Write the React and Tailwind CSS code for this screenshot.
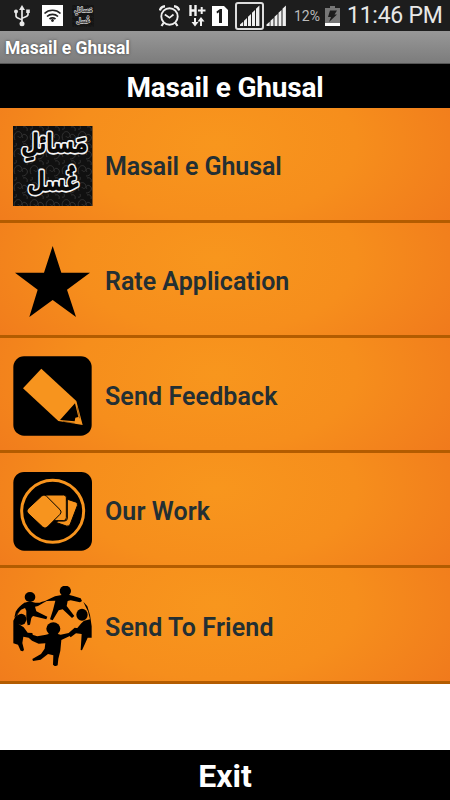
function UsbIcon() {
  return (
    <svg className="h-[22px] w-[18px]" viewBox="0 0 18 22" fill="none" stroke="#e8e8e8" strokeWidth="1.7">
      <path d="M9 19V3M9 15.500C9 13.500 3 14 3 11V7M9 14c0-2 6-1.500 6-4.500V7" />
      <path d="M9 0l3 5H6z" fill="#e8e8e8" stroke="none" />
      <circle cx="9" cy="18.800" r="2.500" fill="#e8e8e8" stroke="none" />
      <circle cx="3" cy="6.500" r="2" fill="#e8e8e8" stroke="none" />
      <path d="M13.200 4.500h3.600v3.600h-3.600z" fill="#e8e8e8" stroke="none" />
    </svg>
  )
}

function WifiIcon() {
  return (
    <svg className="h-[21px] w-[21px]" viewBox="0 0 21 21">
      <rect width="21" height="21" fill="#fff" />
      <g fill="none" stroke="#222" strokeWidth="1.7">
        <path d="M2.500 8.500a11.500 11.500 0 0 1 16 0" />
        <path d="M5 11.500a8 8 0 0 1 11 0" />
        <path d="M7.500 14a4.700 4.700 0 0 1 6 0" />
      </g>
      <circle cx="10.500" cy="15.500" r="1.400" fill="#222" />
    </svg>
  )
}

function AlarmIcon() {
  return (
    <svg className="h-[22px] w-[21px]" viewBox="0 0 21 22" fill="none" stroke="#f0f0f0" strokeWidth="1.9">
      <circle cx="10.500" cy="11.500" r="8.200" />
      <path d="M5.800 9.500l4.700 3.300 4-3.300" strokeWidth="1.700" />
      <path d="M0.800 5.500C1.500 3 3.500 1.500 6 1.300M20.200 5.500C19.500 3 17.500 1.500 15 1.300" strokeWidth="2.400" />
      <path d="M4.500 18l-2 3M16.500 18l2 3" strokeWidth="2.200" />
    </svg>
  )
}

function DataIcon() {
  return (
    <svg className="h-[22px] w-[17px]" viewBox="0 0 17 22" fill="none" stroke="#f2f2f2">
      <path d="M1.500 0v11M6.500 0v11M1.500 5.500h5" strokeWidth="2.400" />
      <path d="M9 5.500h7.500M12.700 2v7" strokeWidth="2" />
      <path d="M6 13v6M12 21v-6" strokeWidth="2" />
      <path d="M2.500 17h7l-3.500 4.500zM8.500 16.500h7l-3.500-4.500z" fill="#f2f2f2" stroke="none" />
    </svg>
  )
}

function SimIcon() {
  return (
    <svg className="h-[20px] w-[16px]" viewBox="0 0 16 20">
      <path d="M0 0h12l4 4v16H0z" fill="#fff" />
      <path d="M4.500 5.500L8 3h2v14H7V6.200L5 7.500z" fill="#1c1c1c" />
    </svg>
  )
}

function SignalBars({ className }) {
  return (
    <svg className={className} viewBox="0 0 21 22" fill="#f0f0f0">
      <path d="M0.500 19.500l3.200-2.800V21H0.500zM4.500 15.700l3-2.700v8h-3zM8.500 11.700L11.500 9v12h-3zM12.500 7.700L15.500 5v16h-3zM16.500 3.700L19.900 0.500V21h-3.400z" />
    </svg>
  )
}

function BatteryIcon() {
  return (
    <svg className="h-[20px] w-[15px]" viewBox="0 0 15 20">
      <path d="M5 0h5v2h5v15H0V2h5z" fill="#777" />
      <path d="M0 17h15v3H0z" fill="#fff" />
      <path d="M5 4.500h7L9.500 8.500H12L4 16l2-5H3z" fill="#1c1c1c" />
    </svg>
  )
}

function CalligraphyLines() {
  return (
    <>
      <text x="41.500" y="26" fontSize="25" textLength="66" lengthAdjust="spacingAndGlyphs">مَسائلِ</text>
      <text x="40" y="64" fontSize="25" textLength="50" lengthAdjust="spacingAndGlyphs">غُسل</text>
    </>
  )
}

function CalligraphyIcon({ className, fill = '#080808' }) {
  return (
    <svg className={className} viewBox="0 0 80 80">
      <defs>
        <pattern id="swirls" width="16" height="17" patternUnits="userSpaceOnUse">
          <rect width="16" height="17" fill="#101010" />
          <g fill="none" stroke="#303030" strokeWidth="1">
            <path d="M2 14C-1 8 5 3 8 7s-2 6-3 3" />
            <path d="M9 16c5 0 7-5 4-7s-5 1-3 3M10 1c3-1 5 1 4 4M1 3c2 1 3-1 2-3" />
          </g>
        </pattern>
      </defs>
      <rect width="79.500" height="80" fill="url(#swirls)" />
      {/* light outline goes under the dark letters */}
      <g className="font-['DejaVu_Sans']" textAnchor="middle" strokeLinejoin="round">
        <g fill="#f4f4f4" stroke="#f4f4f4" strokeWidth="4.800">
          <CalligraphyLines />
        </g>
        <g fill={fill} stroke={fill} strokeWidth="1.700">
          <CalligraphyLines />
        </g>
      </g>
    </svg>
  )
}

function StarIcon({ className }) {
  return (
    <svg className={className} viewBox="39 48 240 240">
      <path d="M158 63l26 80h86l-69 51 27 82-70-51-70 51 25-82-68-51h87z" />
    </svg>
  )
}

function PencilIcon({ className }) {
  return (
    <svg className={className} viewBox="39 48 240 240">
      <rect x="40" y="49" width="235" height="238" rx="32" />
      <path d="M124 86l105 97 19 72-73-12L69 145z" fill="#f7941e" />
      <path d="M225 190l10 41-9 2-2 11-44-4z" />
      <path d="M231 200l8 35M189 244l35 6" fill="none" stroke="#000" strokeWidth="1" />
    </svg>
  )
}

function CardsIcon({ className }) {
  return (
    <svg className={className} viewBox="39 48 240 240">
      <rect x="40" y="51" width="236" height="236" rx="32" />
      <circle cx="158" cy="169" r="93" fill="none" stroke="#f7941e" strokeWidth="9" />
      <g fill="#f7941e" stroke="#000" strokeWidth="3">
        <path d="M200 132l27 9q8 3 5 11l-21 55q-3 9-12 6l-29-10z" />
        <path d="M135 120h56q8 0 8 8v60q0 9-9 9h-25z" />
        <path d="M125 123q7-6 14 0l41 41q7 7 0 14l-38 38q-7 7-14 0l-44-41q-7-7 0-14z" />
      </g>
      <path d="M202 133v56q0 9-8 9h-23" fill="none" stroke="#000" strokeWidth="3" />
    </svg>
  )
}

function FriendsIcon({ className }) {
  return (
    <svg className={className} viewBox="9 9 240 240">
      <ellipse cx="60" cy="42" rx="16" ry="15" />
      <ellipse cx="166" cy="24" rx="17" ry="16" />
      <ellipse cx="130" cy="137" rx="21" ry="19" />
      <ellipse cx="216" cy="95" rx="17" ry="18" />
      <ellipse cx="34" cy="109" rx="15" ry="17" />
      {/* back row */}
      <path d="M44 59q14-5 32 0 10 2 20-3l9-2 30-14 20-4q18-3 35 3l22 7 4 8-6 4-28-6-9 2-3 15 23 30-7 6-28-26-12 3-18 30-8-3 9-28 7-28-26 1-12 7-14 8-9 2 4 14 33 16-3 8-40-10-5 6-4 20-7 2-4-20v-24l-4-8-12 5-20 24 4-18q8-14 28-28z" />
      {/* right side */}
      <path d="M220 56l12 14 8 26 5 34v34h-12l-8 18-9 20-4-1 3-48-17-2-16 12-5-6 18-14 19-22 8-8 18-4-6-24-7-14z" />
      {/* left side */}
      <path d="M29 87l-12 12-7 14v68l14 4 8 18 7 2 3-5-5-20 3-19 20 4 9-6-2-9-14-1-12-16-15-10-5-20 3-10z" />
      {/* front */}
      <path d="M62 154l20 6 26-5q22-7 44 0l24-5 18-16 11 2-21 21-30 14-3 32-6 24-2 20-8 3-6-5 1-28-16-4-22 17-23 4-2-6 26-15 11-16 2-16-20 1-20-9-10-9z" />
    </svg>
  )
}

const items = [
  { label: 'Masail e Ghusal', Icon: CalligraphyIcon, tracking: 'tracking-[-0.1px]' },
  { label: 'Rate Application', Icon: StarIcon, tracking: 'tracking-normal' },
  { label: 'Send Feedback', Icon: PencilIcon, tracking: 'tracking-[0.1px]' },
  { label: 'Our Work', Icon: CardsIcon, tracking: 'tracking-[0.1px]' },
  { label: 'Send To Friend', Icon: FriendsIcon, tracking: 'tracking-[0.15px]' },
]

function StatusBar() {
  return (
    <div className="flex h-[31px] items-center bg-[#1d1d1d] text-[#e8e8e8]">
      <div className="ml-[13px]"><UsbIcon /></div>
      <div className="ml-[11px]"><WifiIcon /></div>
      <CalligraphyIcon className="ml-[9px] h-[22px] w-[22px]" fill="#444" />
      <div className="ml-[65px]"><AlarmIcon /></div>
      <div className="ml-[9px]"><DataIcon /></div>
      <div className="ml-[6px]"><SimIcon /></div>
      <div className="ml-[7px] flex h-[28px] w-[29px] items-center justify-center rounded-[3px] border-2 border-[#ddd]">
        <SignalBars className="h-[22px] w-[22px]" />
      </div>
      <SignalBars className="ml-[2px] h-[22px] w-[21px]" />
      <span className="ml-[7px] w-[28px] pt-[2px] text-[14px] whitespace-nowrap text-[#bbb]">12%</span>
      <div className="ml-[3px]"><BatteryIcon /></div>
      <span className="ml-[7px] text-[23px] leading-[31px] tracking-[-0.25px] whitespace-nowrap">11:46 PM</span>
    </div>
  )
}

function MenuItem({ label, Icon, tracking }) {
  return (
    <button className="group flex h-[115px] w-full items-start border-b-[3px] border-[#b35c00] bg-[radial-gradient(ellipse_280px_150px_at_48%_32%,#f8961d_0%,#f68e1c_50%,#f0791c_100%)] pt-[18px] pl-[13px] text-left last:h-[116px]">
      <Icon className="h-20 w-20 shrink-0" />
      <span className={`mt-[25px] ml-[12px] text-[25px] leading-8 font-semibold whitespace-nowrap text-[#232f33] group-last:mt-[26px] ${tracking}`}>
        {label}
      </span>
    </button>
  )
}

export default function App() {
  return (
    <div className="flex h-[800px] w-[450px] flex-col overflow-hidden bg-white font-[Roboto,sans-serif]">
      <StatusBar />
      <div className="flex h-[33px] items-center border-b border-[#555] bg-gradient-to-b from-[#989898] to-[#7c7c7c] pt-[2px] pl-[5px]">
        <span className="text-[17.500px] font-bold text-white [text-shadow:0_0_3px_#444]">Masail e Ghusal</span>
      </div>
      <h1 className="flex h-11 items-center justify-center bg-black pt-[3px] text-[28px] font-bold tracking-[-0.2px] text-white">
        Masail e Ghusal
      </h1>
      <div>
        {items.map((item) => (
          <MenuItem key={item.label} {...item} />
        ))}
      </div>
      <button className="mt-auto flex h-[50px] items-center justify-center bg-black pt-[2px] text-[32px] font-bold text-white">
        Exit
      </button>
    </div>
  )
}
